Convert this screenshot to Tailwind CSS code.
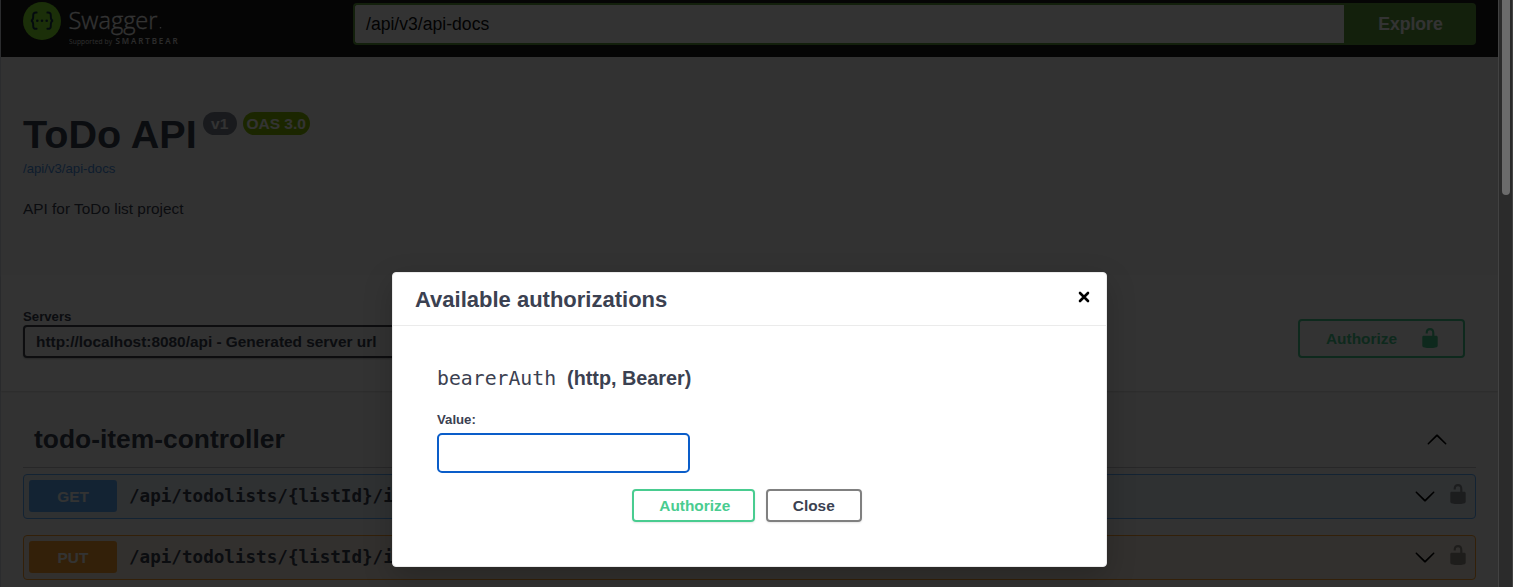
<!DOCTYPE html>
<html lang="en">
<head>
<meta charset="utf-8">
<title>Swagger UI</title>
<script src="https://cdn.jsdelivr.net/npm/@tailwindcss/browser@4"></script>
</head>
<body class="relative h-[587px] w-[1513px] overflow-hidden bg-[#fafafa] font-['Liberation_Sans',Arial,sans-serif] text-[#3b4151]">
<svg class="hidden">
  <symbol id="unlocked" viewBox="0 0 20 20"><path fill="currentColor" d="M15.8 8H14V5.6C14 2.703 12.665 1 10 1 7.334 1 6 2.703 6 5.6V6h2v-.801C8 3.754 8.797 3 10 3c1.203 0 2 .754 2 2.199V8H4c-.553 0-1 .646-1 1.199V17c0 .549.428 1.139.951 1.307l1.197.387C5.672 18.861 6.55 19 7.1 19h5.8c.549 0 1.428-.139 1.951-.307l1.196-.387c.524-.167.953-.757.953-1.306V9.199C17 8.646 16.352 8 15.8 8z"/></symbol>
  <symbol id="chevron" viewBox="0 0 20 20"><path fill="currentColor" d="M17.418 6.109c.272-.268.709-.268.979 0s.271.701 0 .969l-7.908 7.830c-.27.268-.707.268-.979 0l-7.908-7.830c-.27-.268-.27-.701 0-.969.271-.268.709-.268.979 0L10 13.250l7.418-7.141z"/></symbol>
</svg>
<div class="flex h-full">
  <div class="w-px bg-[#d8dde7]"></div>
  <main class="w-[1497px]">
    <header class="flex h-[57px] bg-[#1b1b1b] pl-[22px] pr-[22px] pt-[2px]">
      <div class="flex w-[330px] items-start">
        <svg class="h-[38px] w-[38px]" viewBox="0 0 38 38">
          <circle cx="19" cy="19" r="19" fill="#85ea2d"/>
          <g fill="none" stroke="#173647" stroke-width="2" stroke-linecap="round">
            <path d="M13.6 10.6c-2.7-.2-3.5.8-3.4 3.1.1 2.900-.1 4.600-2.200 5 2.100.4 2.300 2.200 2.200 5-.1 2.400.8 3.300 3.400 3.100M24.400 10.600c2.700-.2 3.500.8 3.400 3.100-.1 2.900.1 4.600 2.200 5-2.100.4-2.300 2.200-2.200 5 .1 2.400-.8 3.300-3.400 3.100"/>
          </g>
          <g fill="#173647"><circle cx="14.300" cy="18.700" r="1.300"/><circle cx="19" cy="18.700" r="1.300"/><circle cx="23.700" cy="18.700" r="1.300"/></g>
        </svg>
        <svg class="ml-[7px] h-[46px] w-[115px]" viewBox="0 0 115 46" fill="#fff">
          <text x="0.500" y="26.500" font-family="Open Sans" font-size="24.500" font-weight="300" stroke="#fff" stroke-width=".3" textLength="89" lengthAdjust="spacingAndGlyphs">Swagger</text>
          <circle cx="92.500" cy="25.800" r=".8"/>
          <text x="1" y="41.500" font-family="Open Sans" font-size="6.600" textLength="43" opacity=".85">Supported by</text>
          <text x="47.500" y="41.500" font-family="Open Sans" font-size="8" font-weight="600" textLength="62" opacity=".85">SMARTBEAR</text>
        </svg>
      </div>
      <div class="mt-px flex h-[42px] flex-1">
        <div class="flex flex-1 items-center rounded-l border-2 border-r-0 border-[#62a03f] bg-white pl-[11px] text-[17.600px] text-[#101010]">/api/v3/api-docs</div>
        <div class="flex w-[132px] items-center justify-center rounded-r bg-[#62a03f] pl-px text-[17.600px] font-bold text-white">Explore</div>
      </div>
    </header>
    <section class="h-[218px] pl-[22px] pt-[55px]">
      <div class="flex h-[44px] items-start">
        <h1 class="text-[39.600px] leading-[44px] font-bold">ToDo API</h1>
        <span class="ml-[6px] flex h-[23px] w-[34px] items-center justify-center rounded-full bg-[#7d8492] text-[15.500px] font-bold text-white">v1</span>
        <span class="ml-[6px] flex h-[23px] w-[67px] items-center justify-center rounded-full bg-[#89bf04] text-[15.500px] font-bold text-white">OAS 3.0</span>
      </div>
      <a class="block pt-[5px] text-[13.200px] leading-4 text-[#4990e2]">/api/v3/api-docs</a>
      <p class="pt-[22px] text-[15.400px] leading-5">API for ToDo list project</p>
    </section>
    <section class="flex h-[116px] justify-between bg-white pl-[22px] pr-[33px] pt-[33px] shadow-[0_1px_2px_rgba(0,0,0,.15)]">
      <div>
        <div class="h-[17px] text-[13.200px] leading-[18px] font-bold">Servers</div>
        <div class="flex h-[33px] w-[480px] items-center rounded border-2 border-[#41444e] bg-[#f7f7f7] pl-[11px] text-[15.400px] font-bold shadow-[0_1px_2px_rgba(0,0,0,.25)]">http://localhost:8080/api - Generated server url</div>
      </div>
      <div class="mt-[11px] flex h-[39px] w-[167px] items-center rounded border-2 border-[#49cc90] pl-[26px] text-[15.400px] font-bold text-[#49cc90]"><span class="w-[93px]">Authorize</span><svg class="mb-[2px] h-[22px] w-[22px]"><use href="#unlocked"/></svg></div>
    </section>
    <section class="pl-[22px] pr-[22px]">
      <div class="flex h-[77px] items-center justify-between border-b border-[#3b4151]/30 pl-[11px] pr-[28px] pt-[21px]">
        <h2 class="pt-px text-[26.400px] font-bold">todo-item-controller</h2>
        <svg class="h-[22px] w-[22px] rotate-180 text-black"><use href="#chevron"/></svg>
      </div>
      <div class="mt-[6px] flex h-[44.5px] items-center rounded border border-[#61affe] bg-[#61affe]/10 pl-[5px] pr-[6px]">
        <div class="flex h-[32px] w-[88px] items-center justify-center rounded-[3px] bg-[#61affe] text-[15.400px] font-bold text-white">GET</div>
        <div class="ml-[12px] flex-1 font-['DejaVu_Sans_Mono',monospace] text-[17.600px] font-bold">/api/todolists/{listId}/items/{itemId}</div>
        <svg class="mr-[11px] h-[22px] w-[22px] text-black"><use href="#chevron"/></svg>
        <svg class="mb-[5px] h-[22px] w-[22px] text-black/40"><use href="#unlocked"/></svg>
      </div>
      <div class="mt-[16.5px] flex h-[44.5px] items-center rounded border border-[#fca130] bg-[#fca130]/10 pl-[5px] pr-[6px]">
        <div class="flex h-[32px] w-[88px] items-center justify-center rounded-[3px] bg-[#fca130] text-[15.400px] font-bold text-white">PUT</div>
        <div class="ml-[12px] flex-1 font-['DejaVu_Sans_Mono',monospace] text-[17.600px] font-bold">/api/todolists/{listId}/items/{itemId}</div>
        <svg class="mr-[11px] h-[22px] w-[22px] text-black"><use href="#chevron"/></svg>
        <svg class="mb-[5px] h-[22px] w-[22px] text-black/40"><use href="#unlocked"/></svg>
      </div>
    </section>
  </main>
</div>
<div class="absolute inset-0 bg-black/80"></div>
<div class="absolute inset-y-0 right-0 w-[15px] border-x border-[#424242] bg-[#2b2b2b]">
  <div class="ml-[3px] h-[195px] w-2 rounded-b-full bg-[#6b6b6b]"></div>
</div>
<div class="absolute left-[392px] top-[272px] h-[295px] w-[715px] rounded border border-[#ebebeb] bg-white shadow-[0_10px_30px_rgba(0,0,0,.2)]">
  <div class="flex h-[53px] items-center justify-between border-b border-[#ebebeb] pl-[22px] pr-[15px]">
    <h3 class="text-[22px] font-bold">Available authorizations</h3>
    <svg class="mb-1 h-[14px] w-[14px]" viewBox="0 0 14 14"><path d="M3 3l8 8M11 3l-8 8" stroke="#000" stroke-width="2.600" stroke-linecap="round"/></svg>
  </div>
  <div class="pl-[44px] pt-[40px]">
    <h4 class="flex h-[26px] items-center text-[19.800px] font-bold"><code class="mr-[11px] font-['DejaVu_Sans_Mono',monospace] text-[19.800px] font-normal">bearerAuth</code>(http, Bearer)</h4>
    <div class="mt-[19px] text-[13.200px] leading-[18px] font-bold">Value:</div>
    <div class="mt-[4px] h-[40px] w-[253px] rounded-[5px] border-2 border-[#0a5dc9]"></div>
    <div class="mt-[16px] flex gap-[11px] pl-[195px] text-[15.400px] font-bold">
      <div class="flex h-[33px] w-[122.500px] items-center justify-center rounded border-2 border-[#49cc90] pl-[3px] text-[#49cc90] shadow-[0_1px_2px_rgba(0,0,0,.1)]">Authorize</div>
      <div class="flex h-[33px] w-[96.500px] items-center justify-center rounded border-2 border-[#808080] shadow-[0_1px_2px_rgba(0,0,0,.1)]">Close</div>
    </div>
  </div>
</div>
</body>
</html>
